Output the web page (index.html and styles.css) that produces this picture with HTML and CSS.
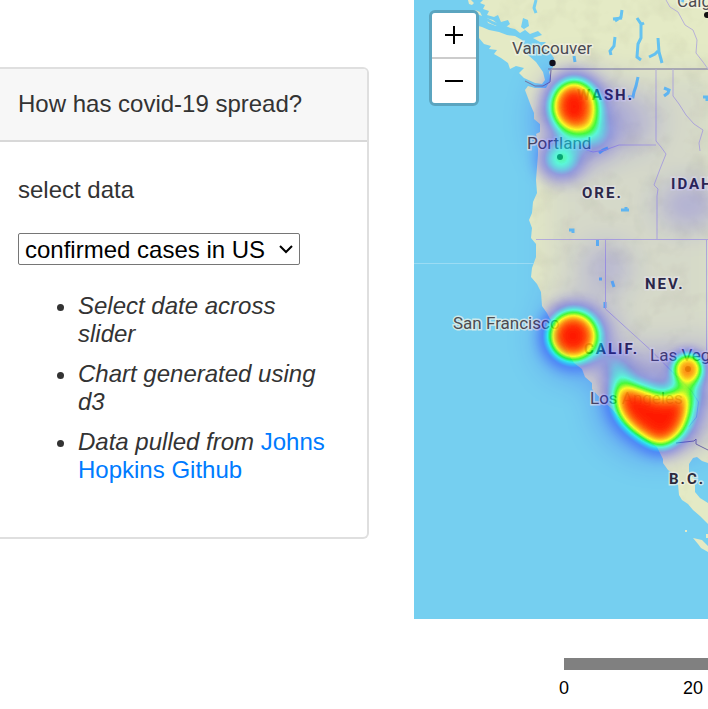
FILE: index.html
```html
<!DOCTYPE html>
<html lang="en">
<head>
<meta charset="utf-8">
<meta name="viewport" content="width=device-width, initial-scale=1">
<title>Covid-19 spread</title>
<link rel="stylesheet" href="styles.css">
</head>
<body>
<main class="layout">
  <section class="card">
    <h1 class="card-header">How has covid-19 spread?</h1>
    <div class="card-body">
      <label class="field-label" for="dataset">select data</label>
      <div class="select-wrap">
        <select class="dataset" id="dataset">
          <option>confirmed cases in US</option>
        </select>
        <svg class="chevron" viewBox="0 0 14 10" aria-hidden="true"><path d="M1 2L7 8L13 2"/></svg>
      </div>
      <ul class="notes">
        <li><em>Select date across slider</em></li>
        <li><em>Chart generated using d3</em></li>
        <li><em>Data pulled from</em> <a href="#github">Johns Hopkins Github</a></li>
      </ul>
    </div>
  </section>
  <section class="viz">
    <div class="map">
      <svg class="map-canvas" viewBox="414 0 294 619" preserveAspectRatio="xMinYMin slice" role="img" aria-label="Heat map of cases">
        <defs>
          <filter id="heat" filterUnits="userSpaceOnUse" x="380" y="-40" width="400" height="700" color-interpolation-filters="sRGB">
            <feColorMatrix values="0 0 0 1 0  0 0 0 1 0  0 0 0 1 0  0 0 0 1 0"/>
            <feComponentTransfer>
              <feFuncR type="table" tableValues="0.1 0.1 0.1 0.1 0.1 0 0 0 1 1 1"/>
              <feFuncG type="table" tableValues="0 0 0 0.05 0.15 0.6 1 1 1 0.5 0.1"/>
              <feFuncB type="table" tableValues="1 1 1 1 1 1 0.9 0 0 0 0"/>
            </feComponentTransfer>
          </filter>
          <filter id="b6" x="-80%" y="-80%" width="260%" height="260%"><feGaussianBlur stdDeviation="6"/></filter>
          <filter id="b9" x="-80%" y="-80%" width="260%" height="260%"><feGaussianBlur stdDeviation="9"/></filter>
          <filter id="b16" x="-80%" y="-80%" width="260%" height="260%"><feGaussianBlur stdDeviation="16"/></filter>
          <filter id="relief" x="0" y="0" width="100%" height="100%" color-interpolation-filters="sRGB">
            <feTurbulence type="fractalNoise" baseFrequency="0.045" numOctaves="3" seed="8"/>
            <feColorMatrix values="0 0 0 0 .5  0 0 0 0 .48  0 0 0 0 .4  1.6 0 0 0 -.75"/>
          </filter>
          <clipPath id="land">
            <path id="coast" d="M483 0L480 3 485 5 483 9 489 11 487 15 494 17 498 15 501 22 508 20 510 24 506 27 515 29 520 33 525 30 521 27 523 18 528 20 529 26 524 29 530 34 538 31 542 35 533 38 540 42 546 42 541 47 549 51 554 58 553 67 549 72 551 79 546 88 535 88 528 86 525 90 528 98 531 106 534 113 534 119 540 124 540 132 536 134 538 142 538 155 537 167 536 180 537 193 533 202 532 213 529 220 532 228 531 238 536 244 536 257 532 268 531 277 537 284 541 292 542 306 547 313 550 319 557 326 564 344 571 358 574 363 582 369 585 377 592 383 592 389 601 399 612 409 622 421 634 432 646 439 657 447 663 459 663 463 668 470 674 474 678 484 679 495 682 500 688 504 693 510 700 516 708 524 708 503 700 498 695 492 695 480 689 473 689 464 693 458 697 457 702 461 708 463 V0Z"/>
          </clipPath>
        </defs>
        <rect class="water" x="414" width="294" height="619"/>
        <use class="terrain" href="#coast"/>
        <g class="terrain">
          <path d="M468 0h3l3 3-2 2-3-1Z M475 10l5 2 2 4-5-2Z M486 18l7 2 5 4-2 2-8-3Z M475 25 L482 27 489 30 499 32 507 35 515 36 522 40 524 47 522 51 528 55 536 62 543 72 545 80 542 84 535 83 524 78 519 73 524 68 516 66 510 69 508 63 501 58 494 54 497 50 489 49 491 46 484 44 479 38 475 37Z M693 538 L702 540 708 546 V552L701 548 698 544Z M706 534h2v4h-2z M685 530h2v2h-2z"/>
        </g>
        <g clip-path="url(#land)"><rect x="414" width="294" height="619" filter="url(#relief)" opacity=".12"/></g>
        <path class="inlets" d="M536 0l-2 8 2 5 M484 18l9 5 14 5 12 8"/>
        <path class="lakes" d="M622 10l-1 7-6 4 M613 19l9 -1 M615 37l-1 9-4 5 1 4 M637 18l4 6 0 14-3 6-1 13 4 3 M642 24l2 -1 M658 38l1 14 3 11 M649 57l6-3 3-3 M638 77l-2 9-2 6-1 5-5 0 M664 88l5 2-1 3-4 3 M703 97h4l0 4 M574 56l1 6 M621 210h8 M626 207v3 M569 230h4v3 M597.500 240v6 M599 279h3 M612 281l2 6 M605 302v6 M608 148l-5 2-4 3 M679 0l5 1"/>
        <g class="borders">
          <path class="nation" d="M548 69H708 M525 81l10 5h8l7 -4 1 -12 M676 443l18 -2 2 -2 0 5 12 6"/>
          <path d="M666 0l4 7 8 5 7 13 8 5 4 10 -1 13 7 9 5 7 M656 69v72l5 6 5 7 -6 15 -6 16 4 4 -1 7v43 M656 145h-37l-14 5 -12 2 -9 -3 M536 239.500H708 M605.500 240v69l44 40 42 42 7 11 -2 15 -8 10 M673 69v27l6 8 7 11 8 9 9 6 -4 13 1 8 M706.500 240v115"/>
        </g>
        <path class="tile-edge" d="M414 263.500H534"/>
        <g class="city">
          <text x="512" y="54">Vancouver</text>
          <text x="677" y="7">Calgary</text>
          <text x="527" y="149">Portland</text>
          <text x="453" y="329">San Francisco</text>
          <text x="650" y="361">Las Vegas</text>
          <text x="590" y="404">Los Angeles</text>
        </g>
        <g class="state">
          <text x="577" y="100">WASH.</text>
          <text x="582" y="198">ORE.</text>
          <text x="671" y="189">IDAHO</text>
          <text x="645" y="289">NEV.</text>
          <text x="584" y="354">CALIF.</text>
          <text x="669" y="484">B.C.</text>
        </g>
        <g class="dots"><circle cx="552.500" cy="63" r="3.200"/><circle cx="707" cy="15" r="3"/><circle cx="560" cy="157" r="3"/><circle cx="688" cy="369" r="3"/></g>
        <g filter="url(#heat)">
          <g filter="url(#b16)">
            <ellipse cx="575" cy="120" rx="38" ry="50" opacity=".28"/>
            <ellipse cx="620" cy="122" rx="38" ry="28" opacity=".19"/>
            <ellipse cx="579" cy="340" rx="39" ry="37" opacity=".28"/>
            <ellipse cx="657" cy="403" rx="59" ry="52" opacity=".28"/>
            <path d="M548 72H720V450H650L580 350 545 300Z" opacity=".07"/>
            <circle cx="606" cy="268" r="21" opacity=".24"/>
            <ellipse cx="690" cy="205" rx="32" ry="19" opacity=".26"/>
            <circle cx="705" cy="363" r="23" opacity=".15"/>
          </g>
          <g filter="url(#b9)">
            <ellipse cx="574" cy="106" rx="25" ry="28.500"/>
            <ellipse cx="560" cy="160" rx="20" ry="18" opacity=".58"/>
            <ellipse cx="594" cy="135" rx="16" ry="15" opacity=".35"/>
            <circle cx="573" cy="336" r="27.500"/>
            <path d="M612 386L636 384 662 394 688 392 693 412 684 436 663 451 646 444 624 427 613 410Z"/>
            <path d="M604 350L630 362 632 392 610 388Z" opacity=".45"/>
            <path d="M676 374L700 375 698 404 673 400Z" opacity=".58"/>
          </g>
          <circle cx="688" cy="368" r="16" opacity=".84" filter="url(#b6)"/>
        </g>
      </svg>
      <div class="zoom">
        <button type="button" aria-label="Zoom in"><svg viewBox="0 0 20 20"><path d="M1 10H19M10 1V19"/></svg></button>
        <button type="button" aria-label="Zoom out"><svg viewBox="0 0 20 20"><path d="M1 10H19"/></svg></button>
      </div>
    </div>
    <div class="timeline">
      <input class="track" type="range" min="0" max="100" value="0" aria-label="Day">
      <ol class="ticks"><li>0</li><li>20</li></ol>
    </div>
  </section>
</main>
</body>
</html>
```

FILE: styles.css
```css
* { box-sizing: border-box; }

body {
  margin: 0;
  background: #fff;
  color: #333;
  font: 24px/28px "Liberation Sans", Arial, sans-serif;
}

.layout {
  display: grid;
  grid-template-columns: minmax(0, 369fr) minmax(0, 294fr);
  column-gap: 45px;
  align-items: start;
}

.card {
  margin-top: 67px;
  border: 2px solid #dfdfdf;
  border-left: 0;
  border-radius: 0 6px 6px 0;
}

.card-header {
  margin: 0;
  padding: 21px 18px 22px;
  background: #f7f7f7;
  border-bottom: 2px solid #d8d8d8;
  border-radius: 0 4px 0 0;
  font-size: 24px;
  font-weight: 400;
}

.card-body { padding: 34px 18px 53px; }

.field-label { display: block; margin-bottom: 29px; }

.select-wrap { position: relative; width: 282px; max-width: 100%; }

.dataset {
  display: block;
  width: 100%;
  height: 32px;
  padding: 2px 6px 0;
  border: 1px solid #767676;
  border-radius: 2px;
  appearance: none;
  background-color: #fff;
  color: #000;
  font: inherit;
}

.chevron {
  position: absolute;
  top: 11px;
  right: 7px;
  width: 14px;
  height: 10px;
  fill: none;
  stroke: #000;
  stroke-width: 2;
  pointer-events: none;
}

.notes { margin: 27px 0 0; padding: 0 20px 0 60px; }
.notes li + li { margin-top: 12px; }
.notes a { color: #007bff; text-decoration: none; }

.map { position: relative; height: 619px; overflow: hidden; background: #75cff0; }
.map-canvas { display: block; width: 100%; height: 100%; }

.water { fill: #75cff0; }
.terrain { fill: #e4eac5; }
.inlets, .lakes, .borders, .tile-edge { fill: none; }
.inlets { stroke: #75cff0; stroke-width: 3; }
.lakes { stroke: #65c3f0; stroke-width: 3; }
.borders { stroke: #b8b1d8; stroke-width: 1; }
.borders .nation { stroke: #77759b; }
.tile-edge { stroke: #9bdcf4; }

.city, .state {
  font-family: Roboto, sans-serif;
  stroke: #f5f5e8;
  stroke-opacity: .7;
  stroke-width: 3;
  paint-order: stroke;
}
.city { font-size: 17px; fill: #4c4c50; }
.state { font-size: 15px; font-weight: 700; letter-spacing: 2px; fill: #2d2b3a; }
.dots { fill: #111; }

.zoom {
  position: absolute;
  top: 10px;
  left: 15px;
  width: 50px;
  border: 3px solid #5ba5c0;
  border-radius: 6px;
  overflow: hidden;
}

.zoom button {
  display: grid;
  place-items: center;
  width: 100%;
  height: 44px;
  padding: 0;
  border: 0;
  background: #fff;
}
.zoom button + button { height: 46px; border-top: 2px solid #ccc; }
.zoom svg { width: 20px; height: 20px; fill: none; stroke: #000; stroke-width: 2; }

.timeline { margin: 39px 0 0 150px; }

.track {
  display: block;
  width: 100%;
  height: 12px;
  margin: 0;
  appearance: none;
  background: #808080;
}
.track::-webkit-slider-thumb { appearance: none; width: 12px; height: 12px; background: transparent; }

.ticks {
  display: flex;
  gap: 129px;
  margin: 8px 0 0;
  padding: 0;
  list-style: none;
  color: #000;
  font-size: 18px;
  line-height: 20px;
}
.ticks li { display: flex; justify-content: center; width: 0; }
```
